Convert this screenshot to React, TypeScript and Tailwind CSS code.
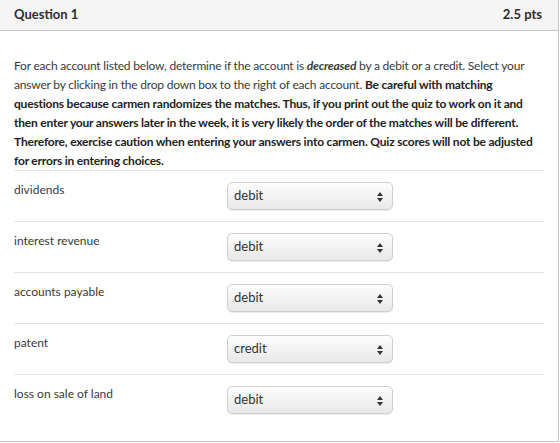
import React from 'react';

const rows = [
  { label: 'dividends', value: 'debit' },
  { label: 'interest revenue', value: 'debit' },
  { label: 'accounts payable', value: 'debit' },
  { label: 'patent', value: 'credit' },
  { label: 'loss on sale of land', value: 'debit' },
];

const SelectBox: React.FC<{ value: string }> = ({ value }) => (
  <div className="relative flex h-[28px] w-[166px] items-center rounded-[5px] border border-[#cfcfcf] bg-gradient-to-b from-[#fdfdfd] to-[#e8e8e8] pl-[6px] text-[13px] text-[#333] shadow-[0_1px_1px_rgba(0,0,0,0.08)]">
    {value}
    <svg className="absolute right-[9px] top-[9px]" width="6" height="10" viewBox="0 0 6 10">
      <path d="M3 0 L6 4 L0 4 Z" fill="#333" />
      <path d="M3 10 L6 6 L0 6 Z" fill="#333" />
    </svg>
  </div>
);

const App: React.FC = () => {
  return (
    <div className="h-[443px] w-[560px] overflow-hidden bg-white font-['Lato',sans-serif]">
      <div className="h-[442px] w-[559px] border-r border-b border-[#c7c7c7]">
        {/* header */}
        <div className="flex h-[31px] items-center justify-between border-b border-[#c7c7c7] bg-[#f5f5f5] pl-[14px] pr-[16px] text-[13px] font-bold text-[#2d2d2d]">
          <span>Question 1</span>
          <span>2.5 pts</span>
        </div>

        {/* body */}
        <div className="px-[14px] pt-[25px]">
          <p className="whitespace-nowrap text-[12px] leading-[19px] tracking-[-0.2px] text-[#3a3a3a]">
            For each account listed below, determine if the account is <b><i>decreased</i></b> by a debit or a credit. Select your<br />
            answer by clicking in the drop down box to the right of each account. <b className="text-[#222]">Be careful with matching<br />
            questions because carmen randomizes the matches. Thus, if you print out the quiz to work on it and<br />
            then enter your answers later in the week, it is very likely the order of the matches will be different.<br />
            Therefore, exercise caution when entering your answers into carmen. Quiz scores will not be adjusted<br />
            for errors in entering choices.</b>
          </p>

          <div className="border-t border-[#e3e3e3]">
            {rows.map((r, i) => (
              <div
                key={r.label}
                className={`flex h-[51px] pt-[11px] ${i < rows.length - 1 ? 'border-b border-[#e3e3e3]' : ''}`}
              >
                <div className="w-[213px] pt-[1px] text-[12px] leading-[14px] text-[#3a3a3a]">{r.label}</div>
                <SelectBox value={r.value} />
              </div>
            ))}
          </div>
        </div>
      </div>
    </div>
  );
};

export default App;
